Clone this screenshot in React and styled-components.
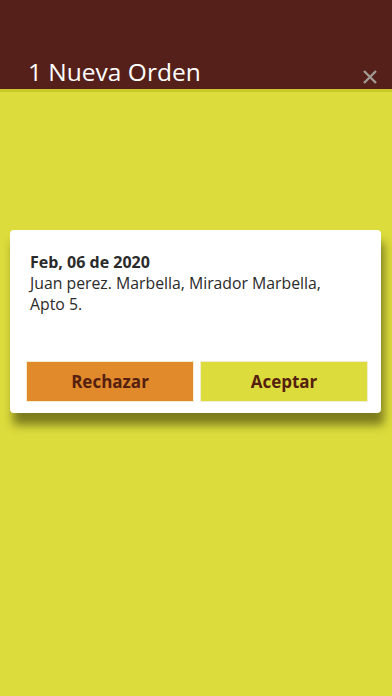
import React from 'react';
import styled, { createGlobalStyle } from 'styled-components';

const GlobalStyle = createGlobalStyle`
    html, body {
        margin: 0;
        padding: 0;
        height: 100%;
    }
    body {
        font-family: "Open Sans", "Liberation Sans", sans-serif;
        background: #dcdc3c;
    }
`;

const Screen = styled.div`
    width: 392px;
    height: 696px;
    background: #dcdc3c;
    display: flex;
    flex-direction: column;
`;

const Header = styled.header`
    height: 92px;
    background-color: #56201a;
    display: flex;
    align-items: flex-end;
    justify-content: space-between;
    padding: 0 14px 3px 28px;
    box-sizing: border-box;
    border-bottom: 3px solid #c8c82a;
`;

const Title = styled.h1`
    margin: 0;
    font-size: 24.5px;
    font-weight: 400;
    color: #ffffff;
    line-height: 32px;
    margin-bottom: -2px;
`;

const Close = styled.button`
    border: none;
    background: transparent;
    padding: 0;
    width: 16px;
    height: 16px;
    margin-bottom: 1px;
    display: flex;
    align-items: center;
    justify-content: center;
`;

const Body = styled.main`
    flex: 1;
    padding: 138px 11px 0 10px;
`;

const Card = styled.div`
    background: #ffffff;
    border-radius: 4px;
    box-shadow: 3px 12px 10px rgba(60, 60, 10, 0.6);
    padding: 22px 13px 11px 16px;
    display: flex;
    flex-direction: column;
`;

const DateLine = styled.div`
    font-weight: 700;
    font-size: 16px;
    color: #2a2a2a;
    line-height: 21px;
    padding-left: 4px;
`;

const Address = styled.div`
    font-size: 15.8px;
    color: #2a2a2a;
    line-height: 21px;
    padding-left: 4px;
`;

const Actions = styled.div`
    display: flex;
    gap: 6px;
    margin-top: 46px;
`;

const Action = styled.button`
    flex: 1;
    height: 41px;
    border: 1px solid #f3ecd0;
    background: ${p => (p.$variant === 'reject' ? '#e08a2c' : '#dcdc3c')};
    color: #55200f;
    font-family: "Open Sans", "Liberation Sans", sans-serif;
    font-weight: 700;
    font-size: 17px;
`;

export default function App() {
    return (
        <>
            <GlobalStyle />
            <Screen>
                <Header>
                    <Title>1 Nueva Orden</Title>
                    <Close aria-label="cerrar">
                        <svg width="14" height="14" viewBox="0 0 14 14">
                            <path d="M1 1 L13 13 M13 1 L1 13" stroke="#a29a95" strokeWidth="2.4" />
                        </svg>
                    </Close>
                </Header>
                <Body>
                    <Card>
                        <DateLine>Feb, 06 de 2020</DateLine>
                        <Address>
                            Juan perez. Marbella, Mirador Marbella,
                            <br />
                            Apto 5.
                        </Address>
                        <Actions>
                            <Action $variant="reject">Rechazar</Action>
                            <Action $variant="accept">Aceptar</Action>
                        </Actions>
                    </Card>
                </Body>
            </Screen>
        </>
    );
}
